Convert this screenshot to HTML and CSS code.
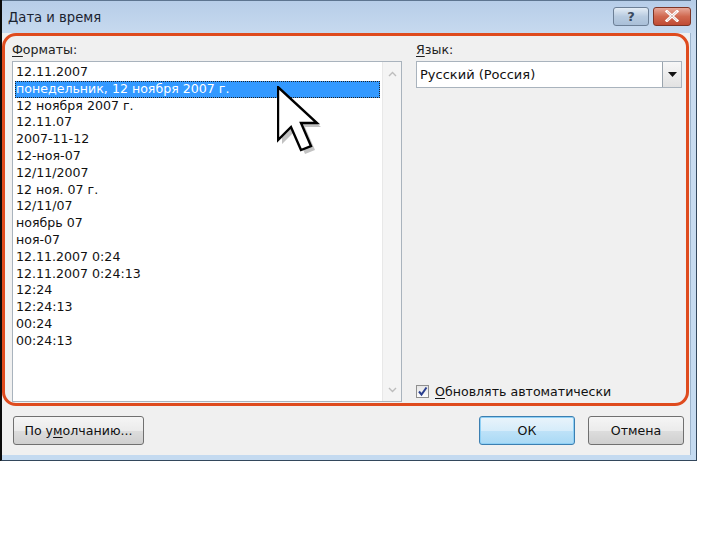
FILE: index.html
```html
<!DOCTYPE html>
<html lang="ru">
<head>
<meta charset="utf-8">
<title>Дата и время</title>
<link rel="stylesheet" href="styles.css">
</head>
<body>
<div class="window">
  <div class="titlebar">
    <span class="title">Дата и время</span>
    <div class="caption-buttons">
      <span class="cbtn help">?</span>
      <span class="cbtn close">
        <svg width="16" height="12" viewBox="0 0 16 12"><path d="M3 1.5 L13 10.5 M13 1.5 L3 10.5" stroke="#fff" stroke-width="3" stroke-linecap="square"/><path d="M3 1.5 L13 10.5 M13 1.5 L3 10.5" stroke="#7a2a20" stroke-width="0.6" fill="none" opacity="0.5"/></svg>
      </span>
    </div>
  </div>
  <div class="client">
    <div class="highlight">
      <div class="col left">
        <div class="label"><u>Ф</u>орматы:</div>
        <div class="listbox">
          <ul class="items">
            <li>12.11.2007</li>
            <li class="selected">понедельник, 12 ноября 2007 г.</li>
            <li>12 ноября 2007 г.</li>
            <li>12.11.07</li>
            <li>2007-11-12</li>
            <li>12-ноя-07</li>
            <li>12/11/2007</li>
            <li>12 ноя. 07 г.</li>
            <li>12/11/07</li>
            <li>ноябрь 07</li>
            <li>ноя-07</li>
            <li>12.11.2007 0:24</li>
            <li>12.11.2007 0:24:13</li>
            <li>12:24</li>
            <li>12:24:13</li>
            <li>00:24</li>
            <li>00:24:13</li>
          </ul>
          <div class="scrollbar">
            <svg class="arrow" width="9" height="6" viewBox="0 0 9 6"><path d="M1 5 L4.5 1.5 L8 5" fill="none" stroke="#bdbdbd" stroke-width="1.4"/></svg>
            <svg class="arrow" width="9" height="6" viewBox="0 0 9 6"><path d="M1 1 L4.5 4.5 L8 1" fill="none" stroke="#bdbdbd" stroke-width="1.4"/></svg>
          </div>
          <svg class="cursor" width="48" height="72" viewBox="0 0 48 72">
            <polygon points="5,5 5,58 18,45 28,68 38,64 28,41 44,41" fill="#9a9a9a" opacity="0.6"/>
            <polygon points="1,1 1,54 14,41 24,64 34,60 24,37 40,37" fill="#fff" stroke="#000" stroke-width="2.4" stroke-linejoin="miter"/>
          </svg>
        </div>
      </div>
      <div class="col right">
        <div class="label"><u>Я</u>зык:</div>
        <div class="combo">
          <span class="combo-text">Русский (Россия)</span>
          <span class="combo-btn"><svg width="9" height="5" viewBox="0 0 9 5"><path d="M0 0 H9 L4.5 5 Z" fill="#111"/></svg></span>
        </div>
        <div class="spacer"></div>
        <label class="check">
          <span class="box"><svg width="11" height="11" viewBox="0 0 11 11"><path d="M2 5.5 L4.5 8.5 L9.5 1.5" fill="none" stroke="#2a3f8f" stroke-width="2"/></svg></span>
          <span><u>О</u>бновлять автоматически</span>
        </label>
      </div>
    </div>
    <div class="footer">
      <button class="btn wide">По у<u>м</u>олчанию...</button>
      <div class="grow"></div>
      <button class="btn default">ОК</button>
      <button class="btn">Отмена</button>
    </div>
  </div>
</div>
</body>
</html>
```

FILE: styles.css
```css
html, body {
  margin: 0;
  padding: 0;
  background: #ffffff;
}
body {
  width: 720px;
  height: 540px;
  overflow: hidden;
  font-family: "DejaVu Sans", "Liberation Sans", sans-serif;
  font-size: 12.6px;
  color: #111;
}
.window {
  width: 697px;
  height: 461px;
  box-sizing: border-box;
  display: flex;
  flex-direction: column;
  background: linear-gradient(#b6cde8, #cadcf0 40px, #c4daf0);
  border-left: 2px solid #0b0b0b;
  border-right: 1px solid #33475c;
  border-bottom: 1px solid #33475c;
  padding: 0 5px 5px 0;
}
.titlebar {
  height: 33px;
  flex: none;
  display: flex;
  align-items: center;
  padding-left: 6px;
  box-sizing: border-box;
  border-top: 1px solid #5d7590;
}
.title {
  font-family: "DejaVu Sans", sans-serif;
  font-size: 13.2px;
  color: #1b2330;
  flex: 1;
}
.caption-buttons {
  display: flex;
  gap: 4px;
  margin-top: -2px;
}
.cbtn {
  height: 19px;
  border: 1px solid #6c7f96;
  border-radius: 3px;
  box-sizing: border-box;
  display: flex;
  align-items: center;
  justify-content: center;
}
.help {
  width: 36px;
  background: linear-gradient(#e4edf6, #b8cbe0 50%, #a9bfd8);
  color: #3a4a60;
  font-size: 13px;
  font-weight: bold;
}
.close {
  width: 38px;
  background: linear-gradient(#e7a99a, #d0684f 50%, #c04b34);
  border-color: #7d3526;
}
.client {
  flex: 1;
  background: #f0f0f0;
  display: flex;
  flex-direction: column;
  border-right: 1px solid #9cb4cc;
}
.highlight {
  height: 373px;
  box-sizing: border-box;
  border: 3px solid #df4b1e;
  border-radius: 14px;
  margin-right: 1px;
  padding: 6px 4px 1px 7px;
  display: flex;
  gap: 14px;
}
.col {
  display: flex;
  flex-direction: column;
}
.left { width: 390px; }
.right { flex: 1; }
.label {
  height: 19px;
  line-height: 16px;
  color: #222;
}
.label u, .check u, .btn u {
  text-decoration-thickness: 1px;
  text-underline-offset: 2px;
}
.listbox {
  flex: 1;
  position: relative;
  display: flex;
  background: #fff;
  border: 1px solid #a9b3bd;
}
.items {
  list-style: none;
  margin: 0;
  padding: 2px 0 0 2px;
  flex: 1;
}
.items li {
  height: 16.8px;
  line-height: 16.8px;
  padding-left: 1px;
  white-space: nowrap;
  color: #111;
}
.items li.selected {
  background: #3399ff;
  color: #fff;
  outline: 1px dotted #222;
  outline-offset: -1px;
  margin-right: 2px;
}
.scrollbar {
  width: 18px;
  background: #f4f4f4;
  border-left: 1px solid #e8e8e8;
  display: flex;
  flex-direction: column;
  justify-content: space-between;
  align-items: center;
  padding: 9px 0 8px;
}
.cursor {
  position: absolute;
  left: 264px;
  top: 24px;
}
.combo {
  height: 27px;
  box-sizing: border-box;
  background: #fff;
  border: 1px solid #a9b3bd;
  display: flex;
  align-items: center;
}
.combo-text {
  flex: 1;
  padding-left: 3px;
  font-size: 13px;
}
.combo-btn {
  width: 19px;
  height: 25px;
  box-sizing: border-box;
  border-left: 1px solid #9aa4ad;
  background: linear-gradient(#f7f7f7, #e2e2e2);
  display: flex;
  align-items: center;
  justify-content: center;
}
.spacer { flex: 1; }
.check {
  display: flex;
  align-items: center;
  gap: 6px;
  height: 16px;
  margin-bottom: 3px;
}
.box {
  width: 13px;
  height: 13px;
  box-sizing: border-box;
  border: 1px solid #8f8f8f;
  background: linear-gradient(#e6e6e6, #fdfdfd);
  display: flex;
  align-items: center;
  justify-content: center;
}
.footer {
  flex: 1;
  display: flex;
  align-items: flex-start;
  padding: 10px 6px 0 11px;
  gap: 13px;
}
.grow { flex: 1; }
.btn {
  height: 29px;
  width: 96px;
  font-family: "DejaVu Sans", sans-serif;
  font-size: 12.6px;
  color: #111;
  border: 1px solid #707070;
  border-radius: 3px;
  background: linear-gradient(#f5f5f5 0%, #ebebeb 50%, #dddddd 51%, #cfcfcf 100%);
  padding: 0;
}
.btn.wide { width: 131px; }
.btn.default {
  border-color: #3c7fb1;
  background: linear-gradient(#e9f4fb 0%, #d6ecfa 50%, #bee2f8 51%, #a9d9f5 100%);
  box-shadow: inset 0 0 0 1px #8fd0f5;
}
```
